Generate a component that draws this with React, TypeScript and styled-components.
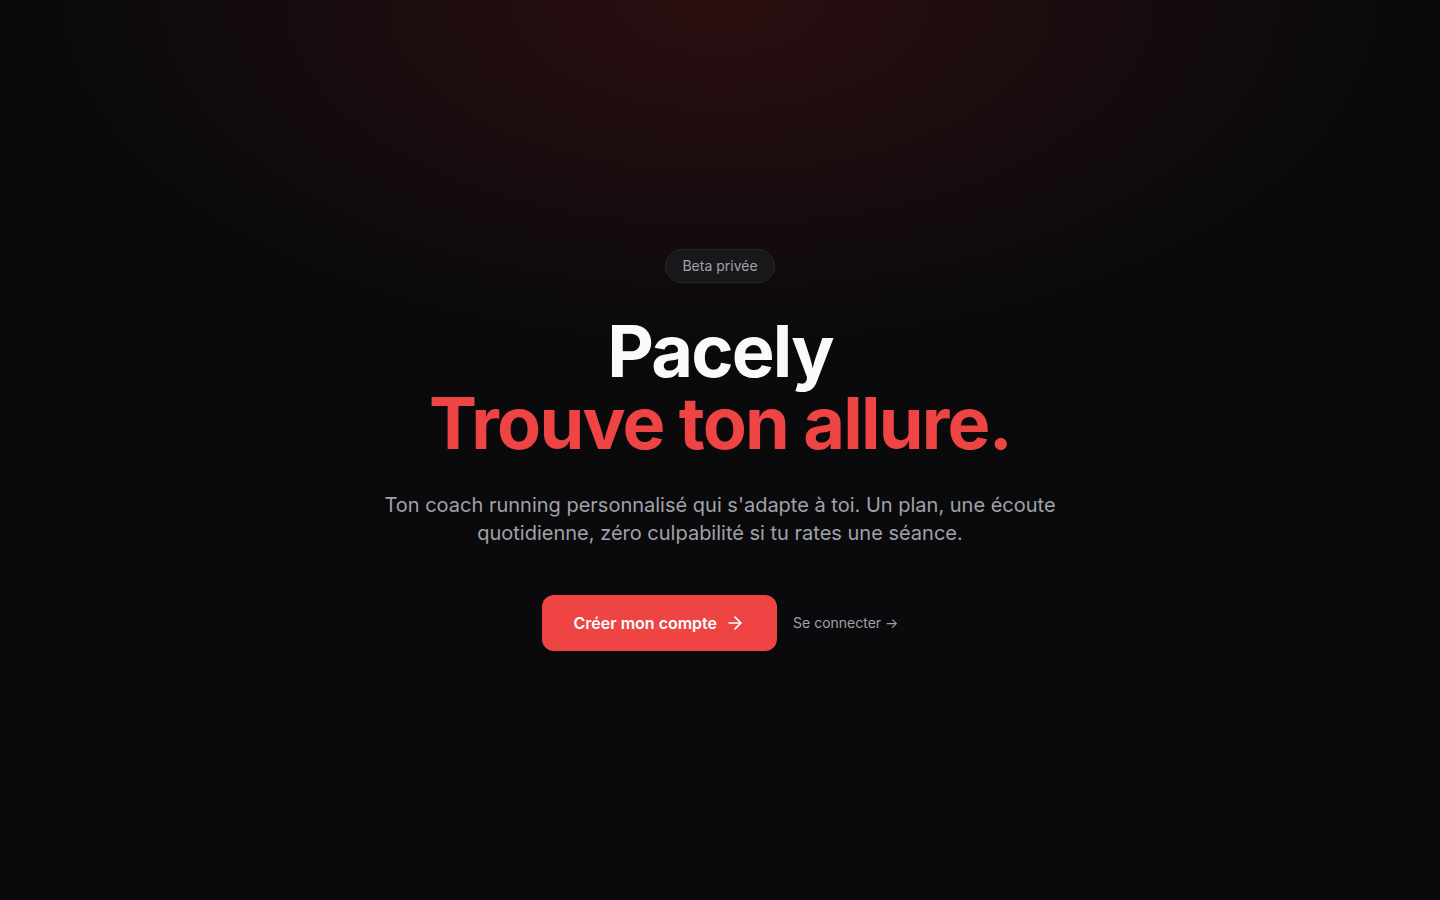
import styled, { createGlobalStyle } from "styled-components";
import { ArrowRight } from "lucide-react";

const GlobalStyle = createGlobalStyle`
  * {
    box-sizing: border-box;
  }
  body {
    margin: 0;
    background: #0a0a0c;
    font-family: Inter, "Noto Sans", sans-serif;
    -webkit-font-smoothing: antialiased;
  }
`

const Wrapper = styled.main`
  align-items: center;
  background:
    radial-gradient(ellipse 46% 38% at 50% 0%, rgba(220, 38, 38, 0.16), rgba(220, 38, 38, 0) 100%),
    #0a0a0c;
  display: flex;
  justify-content: center;
  min-height: 100vh;
  padding: 0 24px;
`
const Hero = styled.section`
  align-items: center;
  display: flex;
  flex-direction: column;
  text-align: center;
`
const Badge = styled.span`
  background-color: #18181b;
  border: 1px solid #27272a;
  border-radius: 999px;
  color: #a1a1aa;
  font-size: 14px;
  line-height: 20px;
  padding: 6px 16px;
`
const Title = styled.h1`
  font-size: 72px;
  font-weight: 700;
  letter-spacing: -0.025em;
  line-height: 1;
  margin: 32px 0 0;
`
const TitleLine = styled.span<{ $accent?: boolean }>`
  color: ${({ $accent }) => ($accent ? "#ef4444" : "#fafafa")};
  display: block;
`
const Lead = styled.p`
  color: #a1a1aa;
  font-size: 20px;
  line-height: 28px;
  margin: 32px 0 0;
  max-width: 672px;
`
const Actions = styled.div`
  align-items: center;
  display: flex;
  gap: 16px;
  margin-top: 48px;
`
const PrimaryButton = styled.button`
  align-items: center;
  background-color: #ef4444;
  border: none;
  border-radius: 12px;
  color: #fff;
  cursor: pointer;
  display: flex;
  font-family: inherit;
  font-size: 16px;
  font-weight: 600;
  gap: 8px;
  line-height: 24px;
  padding: 16px 32px;
`
const TextLink = styled.a`
  color: #a1a1aa;
  font-size: 14px;
  line-height: 20px;
  text-decoration: none;
`

const App = () => {
  return (
    <>
      <GlobalStyle />
      <Wrapper>
        <Hero>
          <Badge>Beta privée</Badge>
          <Title>
            <TitleLine>Pacely</TitleLine>
            <TitleLine $accent>Trouve ton allure.</TitleLine>
          </Title>
          <Lead>
            Ton coach running personnalisé qui s'adapte à toi. Un plan, une écoute
            quotidienne, zéro culpabilité si tu rates une séance.
          </Lead>
          <Actions>
            <PrimaryButton>
              Créer mon compte
              <ArrowRight size={20} strokeWidth={2} />
            </PrimaryButton>
            <TextLink href="#">Se connecter →</TextLink>
          </Actions>
        </Hero>
      </Wrapper>
    </>
  )
}
export default App
